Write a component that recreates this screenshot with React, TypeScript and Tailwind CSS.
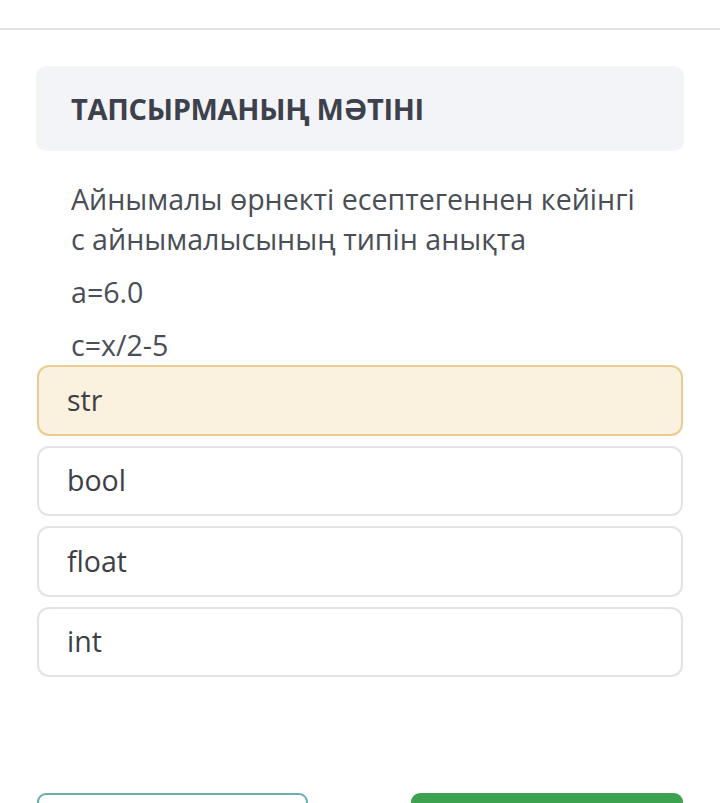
import React from "react";

export default function App() {
  const opts = ["str", "bool", "float", "int"];
  return (
    <div className="w-[720px] h-[803px] bg-white overflow-hidden" style={{ fontFamily: '"Open Sans", "Noto Sans", sans-serif' }}>
      <div className="h-[28px]" />
      <div className="h-[2px] bg-[#e2e2e2]" />
      <div className="px-[36px] pt-[36px]">
        <div className="h-[85px] rounded-[10px] bg-[#f3f4f8] flex items-center px-[35px]">
          <span className="text-[29px] font-bold text-[#3c414b] tracking-[-0.3px]">ТАПСЫРМАНЫҢ МӘТІНІ</span>
        </div>
        <div className="px-[35px] pt-[28px] text-[28.6px] text-[#4a4e56] leading-[40px]">
          <p>Айнымалы өрнекті есептегеннен кейінгі с айнымалысының типін анықта</p>
          <p className="mt-[13px]">a=6.0</p>
          <p className="mt-[13px]">c=x/2-5</p>
        </div>
        <div className="mt-[0px] flex flex-col gap-[10px] px-px">
          {opts.map((o, i) => (
            <div
              key={o}
              className={
                "h-[70.5px] rounded-[12px] border-2 flex items-center px-[28px] text-[28.5px] text-[#3d4047] " +
                (i === 0 ? "border-[#ebcb8f] bg-[#faf1de]" : "border-[#e3e3e3] bg-white")
              }
            >
              {o}
            </div>
          ))}
        </div>
        <div className="mt-[116px] flex justify-between px-px">
          <div className="w-[271px] h-[40px] rounded-[9px] border-2 border-[#6aafb0] bg-white" />
          <div className="w-[272px] h-[40px] rounded-[9px] bg-[#3ca24f]" />
        </div>
      </div>
    </div>
  );
}
